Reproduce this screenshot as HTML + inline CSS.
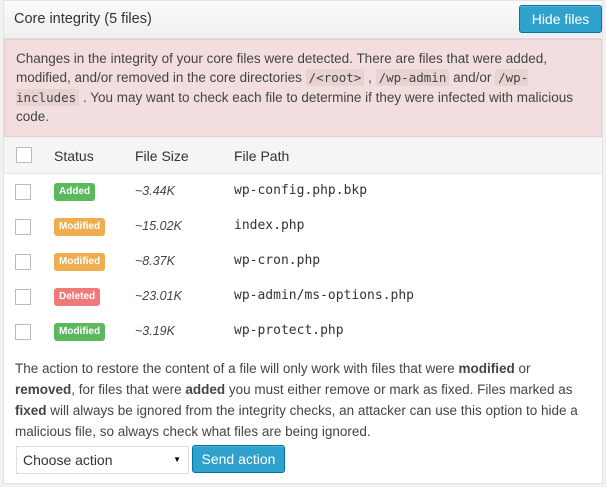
<!DOCTYPE html>
<html><head><style>
*{box-sizing:border-box}
body{margin:0;width:606px;height:487px;background:#f1f1f1;font-family:"Liberation Sans",sans-serif;font-size:13.5px;color:#444;overflow:hidden}
.panel{position:absolute;left:3px;top:0;width:600px;height:484px;background:#fff;border:1px solid #e3e3e3}
.hd{height:38px;background:linear-gradient(#fafafa,#efefef);border-bottom:1px solid #e0e0e0;position:relative}
.hd .t{position:absolute;left:10px;top:10px;font-size:14.5px;color:#333}
.btn{position:absolute;background:#2ea2cc;border:1px solid #0074a2;color:#fff;border-radius:3px;font-size:14px;text-align:center;box-shadow:inset 0 1px 0 rgba(120,200,230,.5)}
.alert{position:absolute;left:0;top:38px;width:598px;height:98px;background:#f2dede;border:1px solid #ebccd1;padding:9px 11px;line-height:19.3px;color:#444;font-size:13.5px}
code{font-family:"DejaVu Sans Mono",monospace;background:#e8d2d2;padding:1px 3px;font-size:12.5px}
.th{position:absolute;left:0;top:136px;width:598px;height:37px;background:#f5f5f5;border-bottom:1px solid #e8e8e8;font-size:14px;color:#333}
.cb{position:absolute;width:16px;height:16px;border:1px solid #bbb;background:#fff}
.row{position:absolute;left:0;width:598px;height:35px}
.lbl{position:absolute;left:50px;top:9px;height:18px;border-radius:3px;color:#fff;font-size:10px;font-weight:bold;line-height:18px;padding:0 5px}
.sz{position:absolute;left:131px;top:10px;font-style:italic;font-size:12.5px}
.fp{position:absolute;left:230px;top:9px;font-family:"DejaVu Sans Mono",monospace;font-size:13px;color:#333}
.p{position:absolute;left:11px;top:357px;width:578px;line-height:21px;font-size:13.5px;color:#444}
.sel{position:absolute;left:12px;top:445px;width:173px;height:28px;border:1px solid #ddd;background:#fff;font-size:14px;padding:5px 6px;color:#333}
</style></head><body>
<div class="panel">
<div class="hd"><span class="t">Core integrity (5 files)</span><div class="btn" style="left:515px;top:4px;width:83px;height:28px;line-height:26px">Hide files</div></div>
<div class="alert">Changes in the integrity of your core files were detected. There are files that were added, modified, and/or removed in the core directories <code>/&lt;root&gt;</code> , <code>/wp-admin</code> and/or <code>/wp-includes</code> . You may want to check each file to determine if they were infected with malicious code.</div>
<div class="th"><div class="cb" style="left:12px;top:10px"></div><span style="position:absolute;left:50px;top:11px">Status</span><span style="position:absolute;left:131px;top:11px">File Size</span><span style="position:absolute;left:230px;top:11px">File Path</span></div>
<div class="row" style="top:173px"><div class="cb" style="left:11px;top:10px"></div><span class="lbl" style="background:#5cb85c">Added</span><span class="sz">~3.44K</span><span class="fp">wp-config.php.bkp</span></div>
<div class="row" style="top:208px"><div class="cb" style="left:11px;top:10px"></div><span class="lbl" style="background:#f0ad4e">Modified</span><span class="sz">~15.02K</span><span class="fp">index.php</span></div>
<div class="row" style="top:243px"><div class="cb" style="left:11px;top:10px"></div><span class="lbl" style="background:#f0ad4e">Modified</span><span class="sz">~8.37K</span><span class="fp">wp-cron.php</span></div>
<div class="row" style="top:278px"><div class="cb" style="left:11px;top:10px"></div><span class="lbl" style="background:#f07a7a">Deleted</span><span class="sz">~23.01K</span><span class="fp">wp-admin/ms-options.php</span></div>
<div class="row" style="top:313px"><div class="cb" style="left:11px;top:10px"></div><span class="lbl" style="background:#5cb85c">Modified</span><span class="sz">~3.19K</span><span class="fp">wp-protect.php</span></div>
<div class="p">The action to restore the content of a file will only work with files that were <b>modified</b> or <b>removed</b>, for files that were <b>added</b> you must either remove or mark as fixed. Files marked as <b>fixed</b> will always be ignored from the integrity checks, an attacker can use this option to hide a malicious file, so always check what files are being ignored.</div>
<div class="sel">Choose action<span style="position:absolute;right:7px;top:8px;font-size:8px;color:#000">▼</span></div>
<div class="btn" style="left:188px;top:444px;width:93px;height:28px;line-height:26px">Send action</div>
</div>
</body></html>
